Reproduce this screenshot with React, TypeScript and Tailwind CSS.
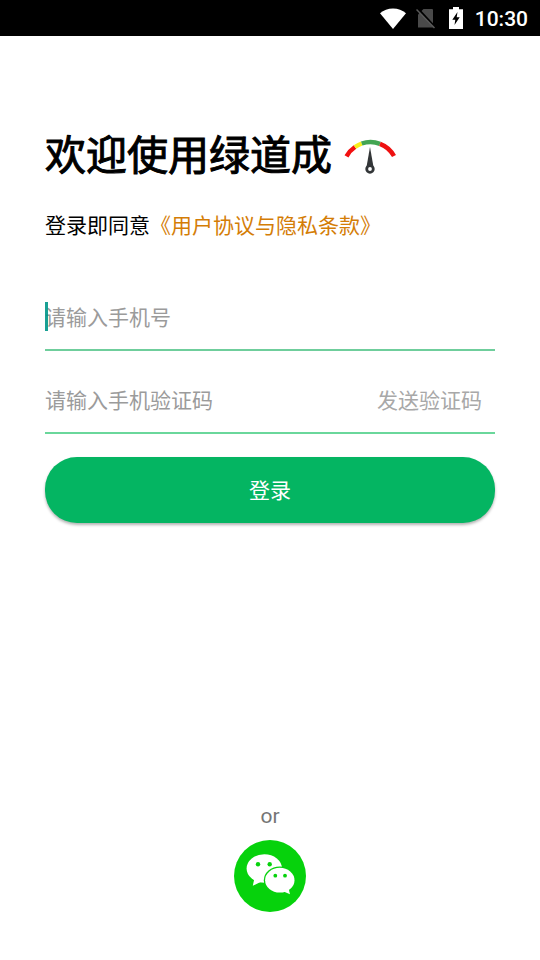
import { useState } from 'react'

function StatusBar() {
    return (
        <div className="flex h-9 items-center justify-end bg-black pr-3 text-white">
            <svg width="26" height="21" viewBox="0 0 26 21" aria-hidden="true">
                <path d="M13 21 0 5.200C3.600 2 8 .4 13 .4S22.400 2 26 5.200Z" fill="#fff" />
            </svg>
            <svg className="ml-2.5" width="19" height="21" viewBox="0 0 19 21" aria-hidden="true">
                <path d="M7.500 1H16a1 1 0 0 1 1 1v17.500H2V6.500Z" fill="#4a4a4a" />
                <path d="M1-.5 19 19" stroke="#000" strokeWidth="2" />
                <path d="M.5 1.500 18.500 20" stroke="#5a5a5a" strokeWidth="1.500" />
            </svg>
            <svg className="ml-3.5" width="14" height="22" viewBox="0 0 14 22" aria-hidden="true">
                <path d="M4 0h6v2.200h4V22H0V2.200h4Z" fill="#fff" />
                <path d="M8.500 5 3.300 12.700h3L5.500 18l5.200-7.700h-3Z" fill="#000" />
            </svg>
            <span className="ml-3 pt-px text-[21px] leading-6 font-medium">10:30</span>
        </div>
    )
}

function GaugeIcon() {
    return (
        <svg className="shrink-0" width="53" height="38" viewBox="0 0 53 38" fill="none" aria-hidden="true">
            <g strokeWidth="4.500">
                <path d="M2.500 19.300A27 27 0 0 1 11 10" stroke="#f21010" />
                <path d="M11 10a26.500 26.500 0 0 1 6.700-3.500" stroke="#f7ee1b" />
                <path d="M17.700 6.500A26.500 26.500 0 0 1 36 6.800" stroke="#43a552" />
                <path d="M36 6.800a26.500 26.500 0 0 1 14 12.200" stroke="#ee1111" />
            </g>
            <path d="M26 10 29.500 30h-7Z" fill="#333638" />
            <circle cx="26" cy="32" r="3.300" fill="#fff" stroke="#333638" strokeWidth="2.800" />
        </svg>
    )
}

function WechatIcon() {
    return (
        <svg width="72" height="72" viewBox="0 0 72 72" aria-hidden="true">
            <circle cx="36" cy="36" r="36" fill="#06d20c" />
            <g fill="#fff">
                <ellipse cx="30.300" cy="28.500" rx="17.700" ry="14.300" />
                <path d="m20.500 38-1.700 7.800 8.200-4Z" />
            </g>
            <ellipse cx="45.800" cy="40.200" rx="16" ry="13.700" fill="#06d20c" />
            <g fill="#fff">
                <ellipse cx="45.800" cy="40.200" rx="14.700" ry="12.400" />
                <path d="m54.500 48 1.500 6.300-7-3Z" />
            </g>
            <g fill="#06d20c">
                <circle cx="24" cy="24.200" r="2.200" />
                <circle cx="35.700" cy="24.200" r="2.200" />
                <circle cx="41.300" cy="35.700" r="1.900" />
                <circle cx="51" cy="35.700" r="1.900" />
            </g>
        </svg>
    )
}

export default function App() {
    const [phone, setPhone] = useState('')
    const [code, setCode] = useState('')

    return (
        <div
            lang="zh-CN"
            className="flex min-h-screen flex-col bg-white font-[Roboto,'Noto_Sans_CJK_SC',sans-serif] text-[21px] leading-8 text-black"
        >
            <StatusBar />

            <main className="flex flex-1 flex-col px-[45px] pt-[90px] pb-12">
                <div className="flex items-center gap-3">
                    <h1 className="text-[41px] leading-[60px] font-normal [-webkit-text-stroke:1px_black]">欢迎使用绿道成</h1>
                    <GaugeIcon />
                </div>

                <p className="mt-6">
                    登录即同意
                    <a href="#terms" className="text-[#d47d06]">《用户协议与隐私条款》</a>
                </p>

                {/* Login form */}
                <form className="mt-14 flex flex-col" onSubmit={(e) => e.preventDefault()}>
                    <div className="relative border-b-2 border-[#6fce9c] pt-1 pb-[15px]">
                        <input
                            type="tel"
                            aria-label="手机号"
                            value={phone}
                            onChange={(e) => setPhone(e.target.value)}
                            placeholder="请输入手机号"
                            className="block h-8 w-full caret-[#009688] outline-none placeholder:text-[#9b9b9b]"
                        />
                        {/* Cursor */}
                        {!phone && <span className="absolute top-1 left-0 h-[29px] w-[3px] bg-[#009688]/90" />}
                    </div>

                    <div className="mt-[34px] flex items-center border-b-2 border-[#6ad79b] pb-[15px]">
                        <input
                            type="text"
                            inputMode="numeric"
                            aria-label="手机验证码"
                            value={code}
                            onChange={(e) => setCode(e.target.value)}
                            placeholder="请输入手机验证码"
                            className="block h-8 min-w-0 flex-1 outline-none placeholder:text-[#9b9b9b]"
                        />
                        <button type="button" className="mr-[13px] text-[#a8a8a8]">发送验证码</button>
                    </div>

                    <button
                        type="submit"
                        className="mt-[23px] h-[66px] rounded-[32px] bg-[#04b562] pt-0.5 text-white shadow-[0_2px_3px_rgba(0,0,0,0.3)]"
                    >
                        登录
                    </button>
                </form>

                {/* Other sign-in methods */}
                <div className="mt-auto flex flex-col items-center gap-2">
                    <span className="text-[#757575]">or</span>
                    <button type="button" aria-label="微信登录" className="rounded-full">
                        <WechatIcon />
                    </button>
                </div>
            </main>
        </div>
    )
}
